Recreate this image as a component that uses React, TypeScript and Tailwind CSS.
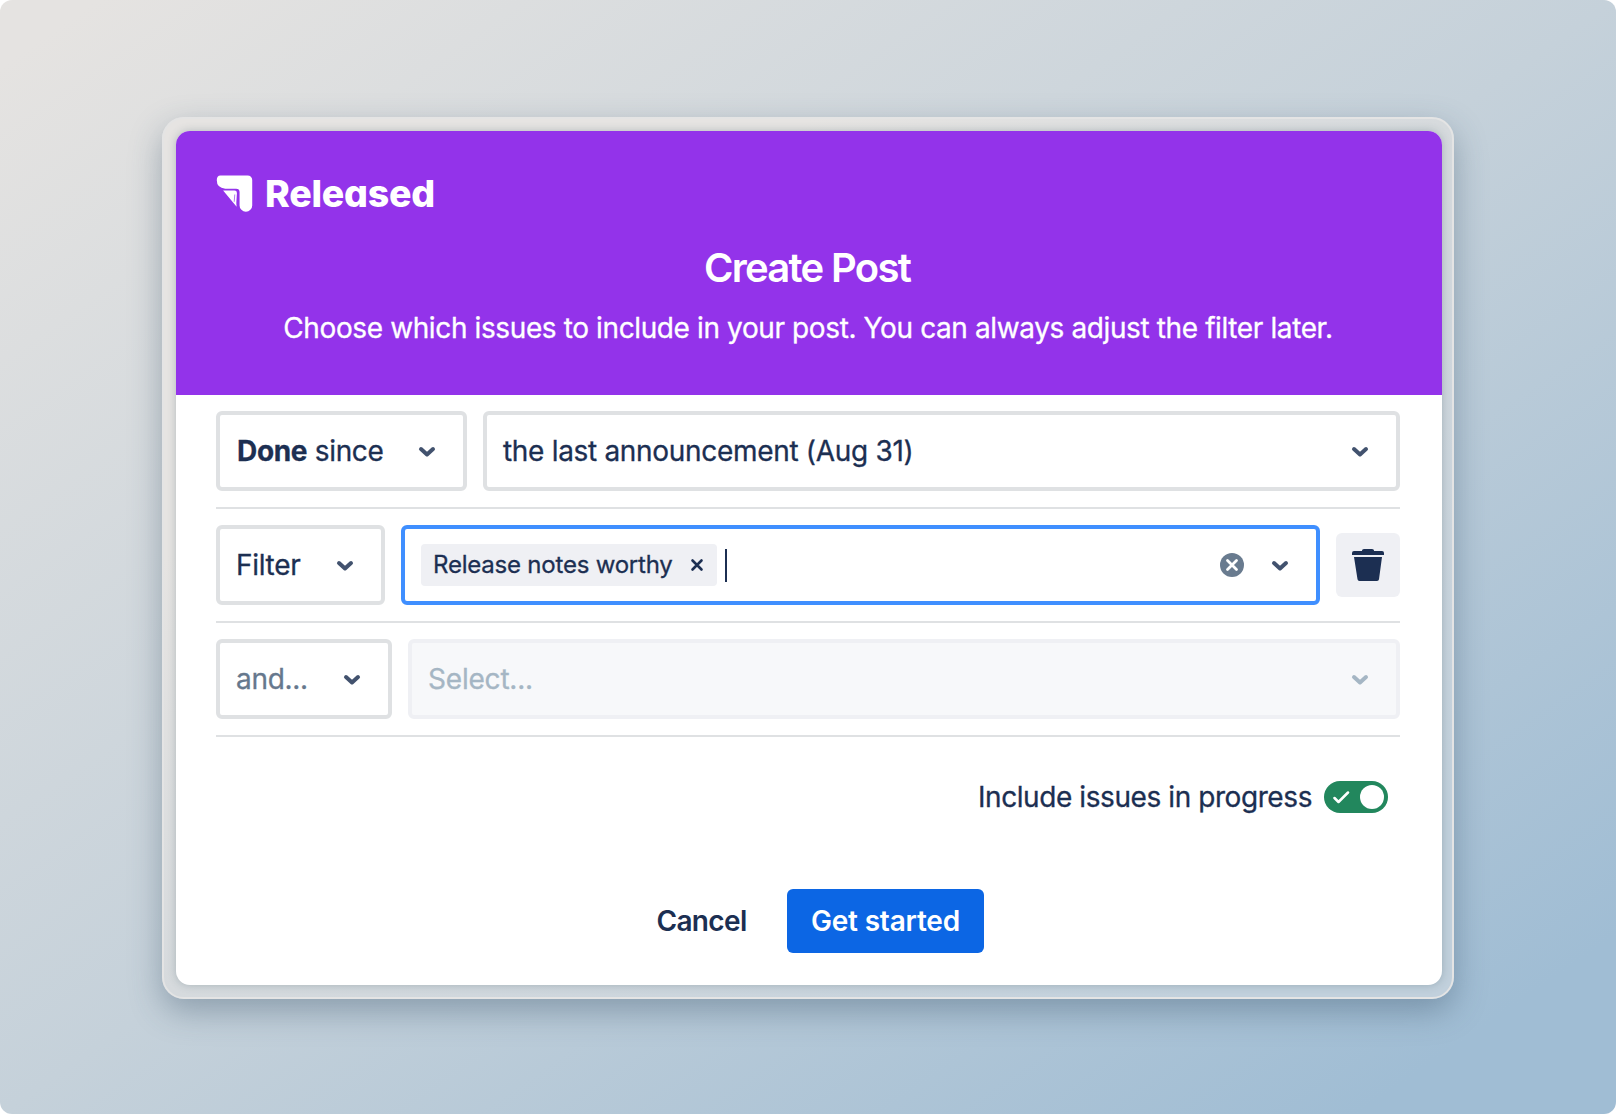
import React from "react";

function Chevron({ className = "text-[#42526e]" }: { className?: string }) {
  return (
    <svg width="18" height="13" viewBox="0 0 18 13" fill="none" className={`shrink-0 ${className}`}>
      <path d="M3 4 9 9.500l6-5.500" stroke="currentColor" strokeWidth="4" strokeLinecap="round" strokeLinejoin="round" />
    </svg>
  );
}

const box = "flex h-20 items-center justify-between rounded-[6px] border-4";

function Row({ children }: { children: React.ReactNode }) {
  return <div className="flex items-center gap-4 border-b-2 border-[#dfe1e3] py-4">{children}</div>;
}

export default function App() {
  return (
    <div className="h-[1114px] w-[1616px] bg-white font-['Inter',sans-serif] text-[#1c2f52]">
      <div className="h-full w-full overflow-hidden rounded-[12px] bg-[linear-gradient(to_bottom_right,#e5e3e1_3%,#c5d1da_50%,#a0bdd4_92%)] px-[162px] pt-[117px]">
        <div className="h-[882px] w-[1292px] rounded-[22px] border-2 border-[#e4e4e4] bg-[linear-gradient(to_bottom_right,#e6e4e2_25%,#d6dadd_50%,#c1d0dc_90%)] p-3 shadow-[0_12px_32px_rgba(50,75,100,0.38)]">
          <main className="flex h-[854px] w-[1266px] flex-col overflow-hidden rounded-[14px] bg-white shadow-[0_0_9px_rgba(60,90,100,0.3)]">
            <header className="h-[264px] bg-[#9333ea] px-10 pt-[42px] text-white">
              <div className="flex h-[40px] items-center gap-[12px]">
                <svg width="37" height="37" viewBox="0 0 37 38" fill="currentColor" className="mt-px">
                  <path d="M4 .5h28a4.700 4.700 0 0 1 4.700 4.700v26a6.500 6.500 0 0 1-13 0V17.500q0-3.500-3.500-3.500H9Q.3 13.500.3 5.500q0-5 3.700-5Z" />
                  <path d="M6.800 16H18.500q2.500 0 2.500 2.500l-.6 9.500q-.1 2 .3 4.500Z" />
                  <path d="m18.800 20-.6 7.500" stroke="#9333ea" strokeWidth=".7" />
                </svg>
                <span className="pt-[2px] text-[37.500px] leading-[40px] font-extrabold tracking-[-0.250px] [font-feature-settings:'cv11']">Released</span>
              </div>
              <h1 className="relative -left-[2px] mt-[31px] text-center text-[40px] leading-[48px] font-semibold tracking-[-1.700px]">Create Post</h1>
              <p className="relative -left-px mt-[18px] text-center text-[28px] leading-[36px] tracking-[-0.385px] whitespace-nowrap [-webkit-text-stroke:0.3px]">
                Choose which issues to include in your post. You can always adjust the filter later.
              </p>
            </header>
            <section className="pr-[42px] pl-10 text-[28px] leading-[36px] [-webkit-text-stroke:0.3px]">
              <Row>
                <div className={`${box} w-[251px] border-[#dfe1e3] pr-[27px] pl-[17px]`}>
                  <span className="tracking-[-0.330px]"><b>Done</b> since</span>
                  <Chevron />
                </div>
                <div className={`${box} flex-1 border-[#dfe1e3] pr-[27px] pl-4`}>
                  <span className="tracking-[-0.310px]">the last announcement (Aug 31)</span>
                  <Chevron />
                </div>
              </Row>
              <Row>
                <div className={`${box} w-[169px] border-[#dfe1e3] pr-[27px] pl-4`}>
                  <span className="tracking-[-0.300px]">Filter</span>
                  <Chevron />
                </div>
                <div className={`${box} flex-1 border-[#3f8fff] pr-[27px] pl-4`}>
                  <div className="flex items-center">
                    <div className="flex h-[42px] w-[296px] items-center justify-between rounded-[4px] bg-[#eff0f4] pr-[13px] pl-3">
                      <span className="text-[24px] leading-[32px] tracking-[-0.210px]">Release notes worthy</span>
                      <svg width="14" height="14" viewBox="0 0 14 14" fill="none" stroke="currentColor" strokeWidth="2.600" strokeLinecap="round">
                        <path d="m2.500 2.500 9 9m0-9-9 9" />
                      </svg>
                    </div>
                    <i className="ml-2 h-[33px] w-[2px] bg-[#1c2f52]" />
                  </div>
                  <div className="flex items-center gap-[27px]">
                    <svg width="24" height="24" viewBox="0 0 24 24" fill="none">
                      <circle cx="12" cy="12" r="12" fill="#697b8f" />
                      <path d="m7.500 7.500 9 9m0-9-9 9" stroke="white" strokeWidth="2.800" strokeLinecap="round" />
                    </svg>
                    <Chevron />
                  </div>
                </div>
                <button className="flex size-16 items-center justify-center rounded-[6px] bg-[#eff0f4]">
                  <svg width="32" height="32" viewBox="0 0 32 32" fill="currentColor">
                    <path d="M0 6V4q0-2 2-2h8V1.500Q10 0 12 0h8q2 0 2 1.500V2h8q2 0 2 2v2ZM2 8h28l-3 22.300q-.2 1.700-2 1.700H7.500q-1.800 0-2-1.700Z" />
                  </svg>
                </button>
              </Row>
              <Row>
                <div className={`${box} w-[176px] border-[#dfe1e3] pr-[27px] pl-4`}>
                  <span className="tracking-[-0.300px] text-[#66788d]">and...</span>
                  <Chevron />
                </div>
                <div className={`${box} flex-1 border-[#eff0f4] bg-[#f7f8fa] pr-[27px] pl-4`}>
                  <span className="tracking-[-0.200px] text-[#a5b6c4]">Select...</span>
                  <Chevron className="text-[#a5b6c4]" />
                </div>
              </Row>
            </section>
            <div className="mt-[42px] flex items-center justify-end gap-[12px] pr-[54px]">
              <span className="text-[28px] leading-[36px] tracking-[-0.420px] [-webkit-text-stroke:0.3px]">Include issues in progress</span>
              <div className="flex h-8 w-16 items-center justify-between rounded-full bg-[#22875d] pr-1 pl-[9px]">
                <svg width="17" height="13" viewBox="0 0 17 13" fill="none">
                  <path d="m1.500 7 4 4L15 1.500" stroke="white" strokeWidth="2.500" strokeLinecap="round" strokeLinejoin="round" />
                </svg>
                <i className="size-6 rounded-full bg-white" />
              </div>
            </div>
            <footer className="mt-[74px] flex items-center pl-[480px] text-[28px] leading-[36px]">
              <button className="w-[91px] font-semibold tracking-[-0.650px] whitespace-nowrap">Cancel</button>
              <button className="ml-10 h-16 w-[197px] rounded-[6px] bg-[#0c66e4] font-semibold tracking-[-0.200px] whitespace-nowrap text-white">Get started</button>
            </footer>
          </main>
        </div>
      </div>
    </div>
  );
}
